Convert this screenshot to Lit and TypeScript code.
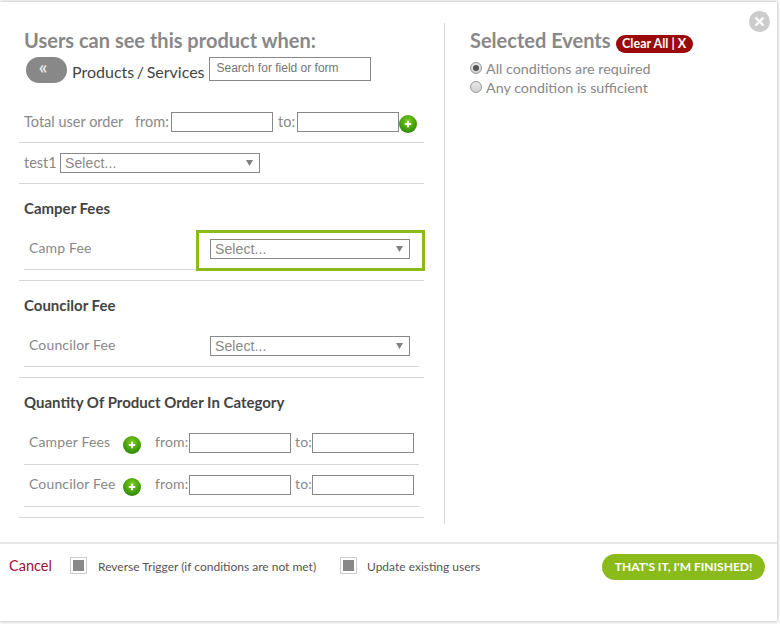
import { LitElement, html, css, svg } from "lit";
import { customElement } from "lit/decorators.js";

const plus = html`<svg class="plus" viewBox="0 0 18 18" width="18" height="18">
  <defs><radialGradient id="pg" cx="50%" cy="35%" r="65%"><stop offset="0" stop-color="#7fce1f"/><stop offset="0.6" stop-color="#4aa40e"/><stop offset="1" stop-color="#2f8a06"/></radialGradient></defs>
  <circle cx="9" cy="9" r="9" fill="url(#pg)"/>
  ${svg`<path d="M9 5.8v6.4M5.8 9h6.4" stroke="#fff" stroke-width="2" fill="none"/>`}
</svg>`;

const select = html`<div class="select"><span>Select...</span><svg width="7" height="6" viewBox="0 0 7 6"><polygon points="0,0 7,0 3.5,6" fill="#808080"/></svg></div>`;

@customElement("app-root")
export class AppRoot extends LitElement {
  static styles = css`
    :host { display: block; width: 780px; height: 624px; background: #f8f8f8; overflow: hidden; font-family: Lato, "Open Sans", sans-serif; color: #888; box-sizing: border-box; padding-top: 2px; }
    * { box-sizing: border-box; }
    .modal { position: relative; width: 777px; height: 619px; background: #fff; box-shadow: 0 0 3px rgba(0,0,0,.3); display: flex; flex-direction: column; }
    .main { height: 540px; display: flex; padding: 21px 0 0 19px; }
    .left { width: 405px; flex: none; }
    .divider { width: 1px; height: 501px; background: #d6d6d6; margin-left: 20px; flex: none; }
    .right { margin-left: 25px; flex: 1; }
    h1 { margin: 0; font-size: 20px; font-weight: 700; line-height: 34px; height: 34px; padding-left: 5px; color: #888; white-space: nowrap; }
    .nav { display: flex; height: 26px; padding-left: 7px; align-items: flex-start; }
    .back { width: 41px; height: 26px; border-radius: 13px; background: #888; color: #e4e4e4; font-weight: 700; font-size: 19px; line-height: 20px; padding-right: 7px; text-align: center; }
    .crumb { margin-left: 5px; font-size: 16px; color: #444; line-height: 30px; white-space: nowrap; word-spacing: -1.5px; }
    .search { margin-left: 4px; width: 162px; height: 24px; border: 1px solid #888; font: 12px "Liberation Sans", Arial, sans-serif; color: #757575; padding: 0 7px; line-height: 20px; }
    .field { width: 102px; height: 20px; border: 1px solid #888; background: #fff; flex: none; }
    .select { width: 200px; height: 20px; border: 1px solid #888; background: #fff; font: 14px "Liberation Sans", Arial, sans-serif; letter-spacing: .1px; color: #888; display: flex; align-items: center; justify-content: space-between; padding: 0 6px 0 4px; flex: none; }
    .line { border-bottom: 1px solid #d6d6d6; }
    .total { margin-top: 19px; height: 41px; display: flex; align-items: flex-start; padding: 10px 0 0 5px; font-size: 14.5px; line-height: 20px; white-space: nowrap; }
    .total .lbl { width: 111px; }
    .total .from { width: 36px; }
    .total .to { margin-left: 5px; width: 19px; }
    .plus { display: block; flex: none; }
    .total .plus { margin-top: 3px; }
    .test { height: 41px; display: flex; align-items: flex-start; padding: 10px 0 0 5px; font-size: 14.5px; line-height: 20px; }
    .test span { width: 36px; }
    h2 { margin: 0; font-size: 15px; font-weight: 700; color: #444; line-height: 20px; height: 20px; padding-left: 5px; white-space: nowrap; }
    .s1 { height: 97px; padding-top: 14px; }
    .s2 { height: 140px; padding-top: 14px; }
    .row { margin: 0 5px; padding: 0 5px; display: flex; align-items: flex-start; font-size: 14px; letter-spacing: .15px; line-height: 18px; white-space: nowrap; }
    .fee { margin-top: 21px; height: 31px; justify-content: space-between; padding-right: 9px; }
    .wrap { position: relative; }
    .hl { position: absolute; left: -14px; right: -15px; top: -9px; bottom: -12px; border: 3px solid #8abb1a; pointer-events: none; }
    .q { height: 42px; padding-top: 10px; }
    .q.first { margin-top: 11px; }
    .q .name { width: 94px; }
    .q .plus { margin-top: 3px; }
    .q .from { margin-left: 14px; width: 34px; }
    .q .to { margin-left: 4px; width: 17px; }
    .sel-head { display: flex; align-items: center; height: 34px; }
    .sel-head h1 { padding: 0; }
    .clear { margin: 8px 0 0 5px; width: 77px; height: 18px; border-radius: 9px; background: #9a0a0a; color: #fff; font-size: 12.5px; font-weight: 700; line-height: 18px; text-align: center; white-space: nowrap; }
    .opts { margin-top: 2px; }
    .opt { display: flex; align-items: center; height: 19px; font-size: 14.3px; color: #888; white-space: nowrap; }
    .radio { width: 12px; height: 12px; border-radius: 50%; border: 1px solid #999; background: linear-gradient(#e8e8e8, #d0d0d0); margin-right: 4px; margin-top: -2px; display: flex; align-items: center; justify-content: center; flex: none; }
    .radio.on::after { content: ""; width: 6px; height: 6px; border-radius: 50%; background: #555; }
    .close { position: absolute; left: 749px; top: 9px; width: 21px; height: 21px; border-radius: 50%; background: #ccc; display: flex; align-items: center; justify-content: center; }
    .footer { flex: 1; border-top: 2px solid #e6e6e6; display: flex; align-items: flex-start; padding: 10px 12px 0 9px; font-size: 12px; color: #555; white-space: nowrap; }
    .cancel { font-size: 14.5px; color: #a01038; line-height: 24px; width: 61px; }
    .check { width: 17px; height: 17px; border: 1px solid #ccc; padding: 2px; margin-top: 3px; flex: none; }
    .check::after { content: ""; display: block; width: 11px; height: 11px; background: #888; }
    .ctext { line-height: 26px; margin-left: 11px; }
    .ctext.c2 { margin-left: 10px; }
    .c1 { width: 242px; }
    .fin { margin-left: auto; width: 163px; height: 26px; border-radius: 13px; background: #8abb1a; color: #fff; font-size: 12px; font-weight: 700; line-height: 26px; text-align: center; }
  `;

  render() {
    return html`
      <div class="modal">
        <div class="main">
          <div class="left">
            <h1>Users can see this product when:</h1>
            <div class="nav">
              <div class="back">«</div>
              <div class="crumb">Products / Services</div>
              <div class="search">Search for field or form</div>
            </div>
            <div class="total line">
              <span class="lbl">Total user order</span><span class="from">from:</span><div class="field"></div>
              <span class="to">to:</span><div class="field"></div>${plus}
            </div>
            <div class="test line"><span>test1</span>${select}</div>
            <div class="s1 line">
              <h2>Camper Fees</h2>
              <div class="row fee line"><span>Camp Fee</span><div class="wrap">${select}<div class="hl"></div></div></div>
            </div>
            <div class="s1 line">
              <h2>Councilor Fee</h2>
              <div class="row fee line"><span>Councilor Fee</span>${select}</div>
            </div>
            <div class="s2 line">
              <h2>Quantity Of Product Order In Category</h2>
              <div class="row q first line"><span class="name">Camper Fees</span>${plus}<span class="from">from:</span><div class="field"></div><span class="to">to:</span><div class="field"></div></div>
              <div class="row q line"><span class="name">Councilor Fee</span>${plus}<span class="from">from:</span><div class="field"></div><span class="to">to:</span><div class="field"></div></div>
            </div>
          </div>
          <div class="divider"></div>
          <div class="right">
            <div class="sel-head"><h1>Selected Events</h1><div class="clear">Clear All | X</div></div>
            <div class="opts">
              <div class="opt"><span class="radio on"></span>All conditions are required</div>
              <div class="opt"><span class="radio"></span>Any condition is sufficient</div>
            </div>
          </div>
        </div>
        <div class="footer">
          <span class="cancel">Cancel</span>
          <span class="check"></span><span class="ctext c1">Reverse Trigger (if conditions are not met)</span>
          <span class="check"></span><span class="ctext c2">Update existing users</span>
          <div class="fin">THAT'S IT, I'M FINISHED!</div>
        </div>
        <div class="close"><svg width="11" height="11" viewBox="0 0 11 11"><path d="M1.5 1.5l8 8M9.5 1.5l-8 8" stroke="#fff" stroke-width="2.4"/></svg></div>
      </div>
    `;
  }
}
